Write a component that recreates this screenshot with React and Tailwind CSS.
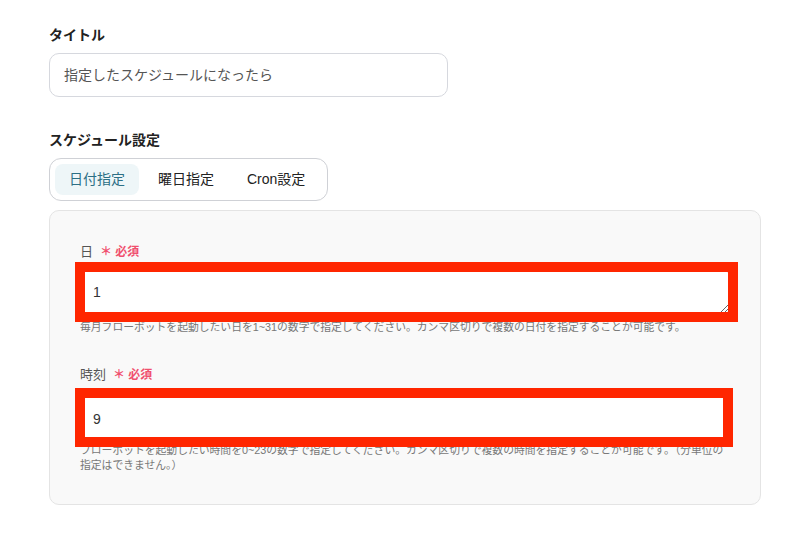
const font = "font-['Liberation_Sans','Noto_Sans_CJK_JP',sans-serif]"

function Required() {
  return (
    <span className="ml-[7px] text-[12px] font-bold text-[#f0506e]">＊ 必須</span>
  )
}

export default function App() {
  return (
    <div className={`${font} min-h-[536px] w-[804px] bg-white px-[49px] pt-[25px] text-[#333]`}>
      <div className="text-[14px] font-bold leading-5 text-[#222]">タイトル</div>
      <div className="mt-2 flex h-[44px] w-[399px] items-center rounded-[10px] border border-[#d6d8de] px-[14px] text-[14px] text-[#555]">
        指定したスケジュールになったら
      </div>

      <div className="mt-[33px] text-[14px] font-bold leading-5 text-[#222]">スケジュール設定</div>
      <div className="mt-2 flex h-[43px] w-[279px] gap-[5px] rounded-xl border border-[#cfd1d6] p-[5px] text-[14px]">
        <div className="flex items-center rounded-lg bg-[#eef6f8] px-[14px] text-[#2c6f85]">日付指定</div>
        <div className="flex items-center px-[14px] text-[#222]">曜日指定</div>
        <div className="flex items-center px-[14px] text-[#222]">Cron設定</div>
      </div>

      <div className="mt-[9px] w-[712px] rounded-[10px] border border-[#e4e4e4] bg-[#f9f9f9] px-[30px] pb-[31px] pt-[33px]">
        <div className="flex items-center text-[13px] leading-4 text-[#555]">
          日<Required />
        </div>
        <div className="relative mt-[10px]">
          <textarea
            defaultValue="1"
            rows={1}
            className="block h-[44px] w-full rounded-md border border-[#dcdcdc] bg-white px-3 py-[11px] text-[14px] leading-5 text-[#333] outline-none"
          />
          <div className="pointer-events-none absolute left-[-5px] top-[-8px] h-[60px] w-[663px] border-[10px] border-[#ff2600]" />
        </div>
        <p className="mt-[6px] text-[10.8px] leading-[15px] text-[#777]">
          毎月フローボットを起動したい日を1~31の数字で指定してください。カンマ区切りで複数の日付を指定することが可能です。
        </p>

        <div className="mt-[32px] flex items-center text-[13px] leading-4 text-[#555]">
          時刻<Required />
        </div>
        <div className="relative mt-[14px]">
          <input
            defaultValue="9"
            className="block h-[44px] w-full rounded-md border border-[#dcdcdc] bg-white px-3 text-[14px] text-[#333] outline-none"
          />
          <div className="pointer-events-none absolute left-[-5px] top-[-9px] h-[59px] w-[658px] border-[10px] border-[#ff2600]" />
        </div>
        <p className="mt-[2px] text-[10.8px] leading-[15px] text-[#777]">
          フローボットを起動したい時間を0~23の数字で指定してください。カンマ区切りで複数の時間を指定することが可能です。（分単位の指定はできません。）
        </p>
      </div>
    </div>
  )
}
